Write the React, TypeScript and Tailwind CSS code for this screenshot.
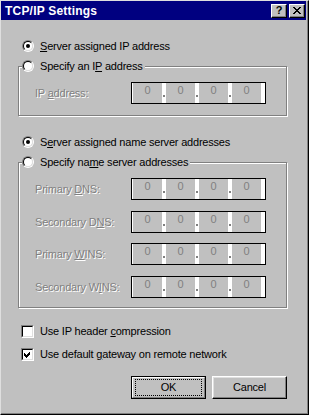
import { Fragment } from 'react'

const DISABLED = 'text-[#808080] [text-shadow:1px_1px_0_#fff]'

// pixel X for the close button, 8x7
const CLOSE_ROWS = ['##....##', '.##..##.', '..####..', '...##...', '..####..', '.##..##.', '##....##']

function CaptionButton({ children }: { children: React.ReactNode }) {
  return (
    <div className="flex h-[14px] w-[16px] items-center justify-center border border-t-white border-l-white border-r-black border-b-black bg-[#c0c0c0] shadow-[inset_-1px_-1px_0_#808080]">
      {children}
    </div>
  )
}

function Radio({ checked }: { checked?: boolean }) {
  return (
    <span className="flex h-[12px] w-[12px] shrink-0 rounded-full border border-t-[#808080] border-l-[#808080] border-r-white border-b-white">
      <span className="flex h-full w-full items-center justify-center rounded-full border border-t-black border-l-black border-r-[#dfdfdf] border-b-[#dfdfdf] bg-white">
        {checked && <span className="h-[4px] w-[4px] rounded-full bg-black" />}
      </span>
    </span>
  )
}

function Checkbox({ checked }: { checked?: boolean }) {
  return (
    <span className="flex h-[13px] w-[13px] shrink-0 border border-t-[#808080] border-l-[#808080] border-r-white border-b-white">
      <span className="flex h-full w-full items-center justify-center border border-t-black border-l-black border-r-[#dfdfdf] border-b-[#dfdfdf] bg-white">
        {checked && (
          <svg width="9" height="9" viewBox="0 0 9 9" shapeRendering="crispEdges">
            <polygon points="1,3 3,5 7,1 7,4 3,8 1,6" fill="#000" />
          </svg>
        )}
      </span>
    </span>
  )
}

function IpField() {
  return (
    <div className="flex h-[22px] w-[135px] shrink-0 border border-black bg-white pl-[1px]">
      {[0, 1, 2, 3].map(i => (
        <Fragment key={i}>
          <div className="flex h-full w-[29px] justify-center bg-[#c0c0c0] pt-[1px] leading-[13px] text-[#808080]">0</div>
          <div className="flex w-[4px] justify-center pt-[12px]">
            {i < 3 && <span className="h-[2px] w-[2px] bg-[#808080]" />}
          </div>
        </Fragment>
      ))}
    </div>
  )
}

function FieldRow({ label, className = '' }: { label: React.ReactNode; className?: string }) {
  return (
    <div className={`flex items-center pl-[16px] ${className}`}>
      <span className={`w-[96px] leading-[13px] ${DISABLED}`}>{label}</span>
      <IpField />
    </div>
  )
}

export default function App() {
  return (
    <div className="h-[415px] w-[309px] border border-t-[#dfdfdf] border-l-[#dfdfdf] border-r-black border-b-black bg-[#c0c0c0] font-['Liberation_Sans',Arial,sans-serif]">
      <div className="flex h-full flex-col border-r border-b border-r-[#808080] border-b-[#808080]">
        {/* Title bar */}
        <div className="mr-[1px] flex h-[19px] shrink-0 items-center bg-[#000080] pl-[4px] pr-[1px]">
          <span className="flex-1 text-[12px] font-bold tracking-[0.2px] text-white">TCP/IP Settings</span>
          <div className="flex gap-[2px]">
            <CaptionButton>
              <span className="text-[11px] font-bold leading-none text-black">?</span>
            </CaptionButton>
            <CaptionButton>
              <svg width="8" height="7" viewBox="0 0 8 7" shapeRendering="crispEdges">
                {CLOSE_ROWS.flatMap((row, y) =>
                  row.split('').map((c, x) => (c === '#' ? <rect key={`${x}-${y}`} x={x} y={y} width="1" height="1" fill="#000" /> : null)),
                )}
              </svg>
            </CaptionButton>
          </div>
        </div>

        {/* Body */}
        <div className="flex flex-col pl-[17px] text-[11px] tracking-[-0.2px] text-black">
          <label className="ml-[4px] mt-[20px] flex h-[12px] items-center gap-[6px] leading-[12px]">
            <Radio checked />
            <span>
              <u className="underline-offset-[1px]">S</u>erver assigned IP address
            </span>
          </label>

          <div className="mt-[14px] w-[269px] border border-[#808080] pb-[11px] shadow-[1px_1px_0_#fff,inset_1px_1px_0_#fff]">
            <label className="-mt-[7px] ml-[3px] flex h-[12px] w-fit items-center gap-[6px] bg-[#c0c0c0] pr-[2px] leading-[12px]">
              <Radio />
              <span>
                Specify an I<u className="underline-offset-[1px]">P</u> address
              </span>
            </label>
            <FieldRow
              className="mt-[10px]"
              label={
                <>
                  IP <u className="underline-offset-[1px]">a</u>ddress:
                </>
              }
            />
          </div>

          <label className="ml-[4px] mt-[20px] flex h-[12px] items-center gap-[6px] leading-[12px]">
            <Radio checked />
            <span>
              S<u className="underline-offset-[1px]">e</u>rver assigned name server addresses
            </span>
          </label>

          <div className="mt-[14px] w-[269px] border border-[#808080] pb-[9px] shadow-[1px_1px_0_#fff,inset_1px_1px_0_#fff]">
            <label className="-mt-[7px] ml-[3px] flex h-[12px] w-fit items-center gap-[6px] bg-[#c0c0c0] pr-[2px] leading-[12px]">
              <Radio />
              <span>
                Specify na<u className="underline-offset-[1px]">m</u>e server addresses
              </span>
            </label>
            <FieldRow
              className="mt-[10px]"
              label={
                <>
                  Primary <u className="underline-offset-[1px]">D</u>NS:
                </>
              }
            />
            <FieldRow
              className="mt-[11px]"
              label={
                <>
                  Secondary D<u className="underline-offset-[1px]">N</u>S:
                </>
              }
            />
            <FieldRow
              className="mt-[10px]"
              label={
                <>
                  Primary <u className="underline-offset-[1px]">W</u>INS:
                </>
              }
            />
            <FieldRow
              className="mt-[11px]"
              label={
                <>
                  Secondary W<u className="underline-offset-[1px]">I</u>NS:
                </>
              }
            />
          </div>

          <label className="ml-[3px] mt-[17px] flex h-[13px] items-center gap-[6px] leading-[13px]">
            <Checkbox />
            <span>
              Use IP header <u className="underline-offset-[1px]">c</u>ompression
            </span>
          </label>
          <label className="ml-[3px] mt-[10px] flex h-[13px] items-center gap-[6px] leading-[13px]">
            <Checkbox checked />
            <span>
              Use default <u className="underline-offset-[1px]">g</u>ateway on remote network
            </span>
          </label>

          {/* Buttons */}
          <div className="ml-[113px] mt-[15px] flex gap-[6px]">
            <button className="h-[23px] w-[75px] border border-black bg-[#c0c0c0] p-0">
              <div className="flex h-full w-full border border-t-white border-l-white border-r-[#808080] border-b-[#808080] px-[2px] py-[1px]">
                <div className="flex h-full w-full items-center justify-center border border-dotted border-black leading-[13px]">
                  OK
                </div>
              </div>
            </button>
            <button className="flex h-[23px] w-[75px] items-center justify-center border border-t-white border-l-white border-r-black border-b-black bg-[#c0c0c0] leading-[13px] shadow-[inset_-1px_-1px_0_#808080,inset_1px_1px_0_#dfdfdf]">
              Cancel
            </button>
          </div>
        </div>
      </div>
    </div>
  )
}
